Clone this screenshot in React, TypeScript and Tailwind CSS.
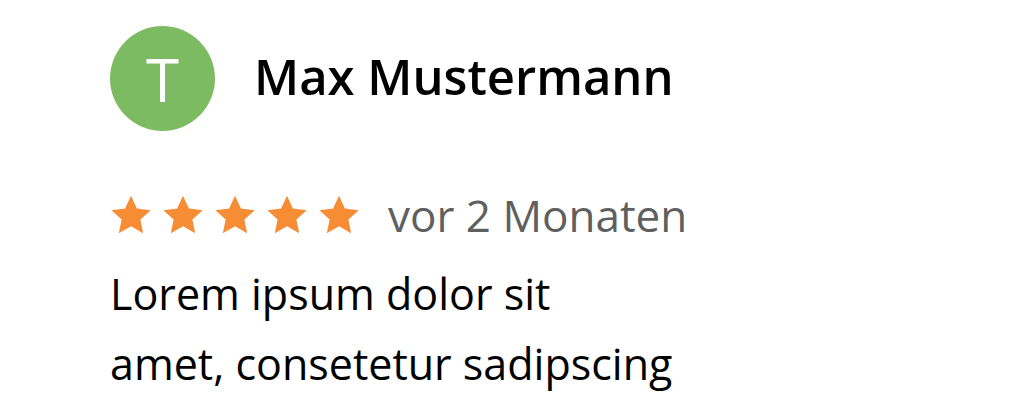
export default function App() {
  const stars = [0, 1, 2, 3, 4];
  return (
    <div
      className="w-[1024px] h-[410px] bg-white pl-[110px] pt-[26px]"
      style={{ fontFamily: '"Open Sans", sans-serif' }}
    >
      <div className="flex items-center">
        <div className="w-[105px] h-[105px] rounded-full bg-[#7dbb62] flex items-center justify-center">
          <span className="text-white text-[60px] font-normal leading-none">T</span>
        </div>
        <span className="ml-[39px] text-[49px] font-semibold text-black leading-none -mt-[4px]">Max Mustermann</span>
      </div>

      <div className="flex items-center mt-[62px]">
        <div className="flex gap-[10px]">
          {stars.map((i) => (
            <svg key={i} width="42" height="40" viewBox="0 0 24 23">
              <path
                d="M12 0.5l3.4 7.3 7.9 0.9-5.9 5.4 1.6 7.9L12 18l-7 4 1.6-7.9L0.7 8.7l7.9-0.9z"
                fill="#f68d35"
              />
            </svg>
          ))}
        </div>
        <span className="ml-[28px] text-[44px] text-[#5f5f5f] leading-none">vor 2 Monaten</span>
      </div>

      <div className="mt-[22px] text-[43px] leading-[70px] text-black">
        <div>Lorem ipsum dolor sit</div>
        <div>amet, consetetur sadipscing</div>
      </div>
    </div>
  );
}
